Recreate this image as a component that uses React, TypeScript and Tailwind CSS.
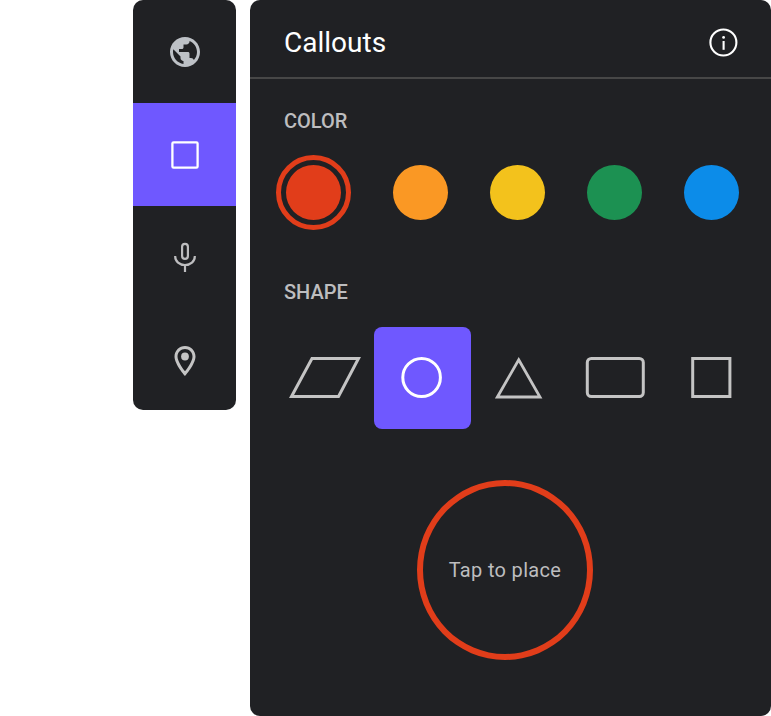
import React from "react";

type Shape = { name: string; cell: string; selected?: boolean; icon: React.ReactNode };

const tools = [
  {
    name: "Globe",
    cell: "h-[103px] pt-[34px]",
    icon: (
      <svg width="36" height="36" viewBox="0 0 24 24" fill="#bdc1c6">
        <path d="M12 2C6.48 2 2 6.48 2 12s4.48 10 10 10 10-4.48 10-10S17.52 2 12 2zm-1 17.93c-3.95-.49-7-3.85-7-7.93 0-.62.08-1.21.21-1.79L9 15v1c0 1.1.9 2 2 2v1.93zm6.9-2.54c-.26-.81-1-1.39-1.9-1.39h-1v-3c0-.55-.45-1-1-1H8v-2h2c.55 0 1-.45 1-1V7h2c1.1 0 2-.9 2-2v-.41c2.93 1.19 5 4.06 5 7.41 0 2.08-.8 3.97-2.1 5.39z" />
      </svg>
    ),
  },
  {
    name: "Callouts",
    cell: "h-[103px] pt-[34px] bg-[#6f58ff]",
    icon: (
      <svg width="36" height="36" viewBox="0 0 36 36" fill="none" stroke="#fff" strokeWidth="2.3">
        <rect x="5.4" y="5.4" width="25.2" height="25.2" rx="1.2" />
      </svg>
    ),
  },
  {
    name: "Microphone",
    cell: "h-[103px] pt-[34px]",
    icon: (
      <svg width="36" height="36" viewBox="0 0 36 36" fill="none" stroke="#bdbdbf" strokeWidth="2.2">
        <rect x="15.1" y="3.9" width="5.8" height="15" rx="2.9" />
        <path d="M8.2 16v.4c0 5 4.3 8.6 9.8 8.6s9.8-3.6 9.8-8.6V16M18 25v7" />
      </svg>
    ),
  },
  {
    name: "Location",
    cell: "h-[101px] pt-[34px]",
    icon: (
      <svg width="36" height="36" viewBox="0 0 24 24" fill="#c4c4c4">
        <path d="M12 2C8.13 2 5 5.13 5 9c0 5.25 7 13 7 13s7-7.75 7-13c0-3.87-3.13-7-7-7zM7 9c0-2.76 2.24-5 5-5s5 2.24 5 5c0 2.88-2.88 7.19-5 9.88C9.92 16.21 7 11.85 7 9z" />
        <circle cx="12" cy="9" r="2.6" />
      </svg>
    ),
  },
];

const colors = [
  { name: "Orange", className: "bg-[#fa9824]" },
  { name: "Yellow", className: "bg-[#f3c21c]" },
  { name: "Green", className: "bg-[#1c9152]" },
  { name: "Blue", className: "bg-[#0c8ce9]" },
];

const shapes: Shape[] = [
  {
    name: "Parallelogram",
    cell: "w-[85px] pl-0",
    icon: (
      <svg width="72" height="42" fill="none" stroke="#c4c4c4" strokeWidth="3">
        <path d="M2.5 39.5L23 1.5H69.5L49.5 39.5Z" />
      </svg>
    ),
  },
  {
    name: "Circle",
    cell: "w-[96.6px] pl-[27px] rounded-lg bg-[#6f58ff]",
    selected: true,
    icon: (
      <svg width="42" height="42" fill="none" stroke="#fff" strokeWidth="3">
        <ellipse cx="20.6" cy="20.5" rx="18.8" ry="19" />
      </svg>
    ),
  },
  {
    name: "Triangle",
    cell: "w-[114.4px] pl-[24.4px]",
    icon: (
      <svg width="48" height="42" fill="none" stroke="#c4c4c4" strokeWidth="2.8">
        <path d="M23.7 2.8L45 40H2.4Z" />
      </svg>
    ),
  },
  {
    name: "Rounded rectangle",
    cell: "w-[105px] pl-0",
    icon: (
      <svg width="61" height="42" fill="none" stroke="#c4c4c4" strokeWidth="3">
        <rect x="2.3" y="1.5" width="56" height="38" rx="4" />
      </svg>
    ),
  },
  {
    name: "Square",
    cell: "w-[45px] pl-0",
    icon: (
      <svg width="42" height="42" fill="none" stroke="#c4c4c4" strokeWidth="3">
        <rect x="2.7" y="1.5" width="37.2" height="38" />
      </svg>
    ),
  },
];

export default function App() {
  return (
    <div className="flex h-[716px] w-[771px] items-start gap-3.5 overflow-hidden bg-white pl-[133px] font-['Roboto',sans-serif]">
      <nav className="flex w-[103px] shrink-0 flex-col overflow-hidden rounded-[10px] bg-[#202124]">
        {tools.map((tool) => (
          <button key={tool.name} aria-label={tool.name} className={`flex items-start justify-center ${tool.cell}`}>
            {tool.icon}
          </button>
        ))}
      </nav>

      <main className="flex h-[716px] w-[521px] shrink-0 flex-col rounded-[10px] bg-[#202124]">
        <header className="flex h-[79px] items-start justify-between border-b-2 border-[#474747] pt-[26px] pr-[32px] pl-[34px]">
          <h1 className="text-[28px] leading-[33px] text-white">Callouts</h1>
          <svg width="32" height="32" fill="none" stroke="#fff" strokeWidth="2.1">
            <circle cx="16.4" cy="16.5" r="13" />
            <path d="M16.6 15v8.8" />
            <circle cx="16.6" cy="11.4" r="1.4" fill="#fff" stroke="none" />
          </svg>
        </header>

        <h2 className="mt-[30px] pl-[34px] text-[20px] leading-6 font-medium text-[#bdbdbf]">COLOR</h2>
        <div className="mt-[22px] flex items-center gap-[42px] pl-[26px]">
          <button
            aria-label="Red"
            className="flex size-[75px] shrink-0 items-center justify-center rounded-full border-5 border-[#e13d1a]"
          >
            <span className="size-[55px] shrink-0 rounded-full bg-[#e13d1a]" />
          </button>
          {colors.map((color) => (
            <button key={color.name} aria-label={color.name} className={`size-[55px] shrink-0 rounded-full ${color.className}`} />
          ))}
        </div>

        <h2 className="mt-[50px] pl-[34px] text-[20px] leading-6 font-medium text-[#bdbdbf]">SHAPE</h2>
        <div className="mt-[23px] flex pl-[39px]">
          {shapes.map((shape) => (
            <button
              key={shape.name}
              aria-label={shape.name}
              aria-pressed={!!shape.selected}
              className={`flex h-[102px] shrink-0 items-start pt-[30px] ${shape.cell}`}
            >
              {shape.icon}
            </button>
          ))}
        </div>

        <div className="mt-[51px] ml-[167px] flex h-[180px] w-[176px] items-center justify-center rounded-[50%] border-6 border-[#e13d1a]">
          <span className="text-[20px] leading-6 tracking-[0.33px] whitespace-nowrap text-[#bdbdbf]">Tap to place</span>
        </div>
      </main>
    </div>
  );
}
